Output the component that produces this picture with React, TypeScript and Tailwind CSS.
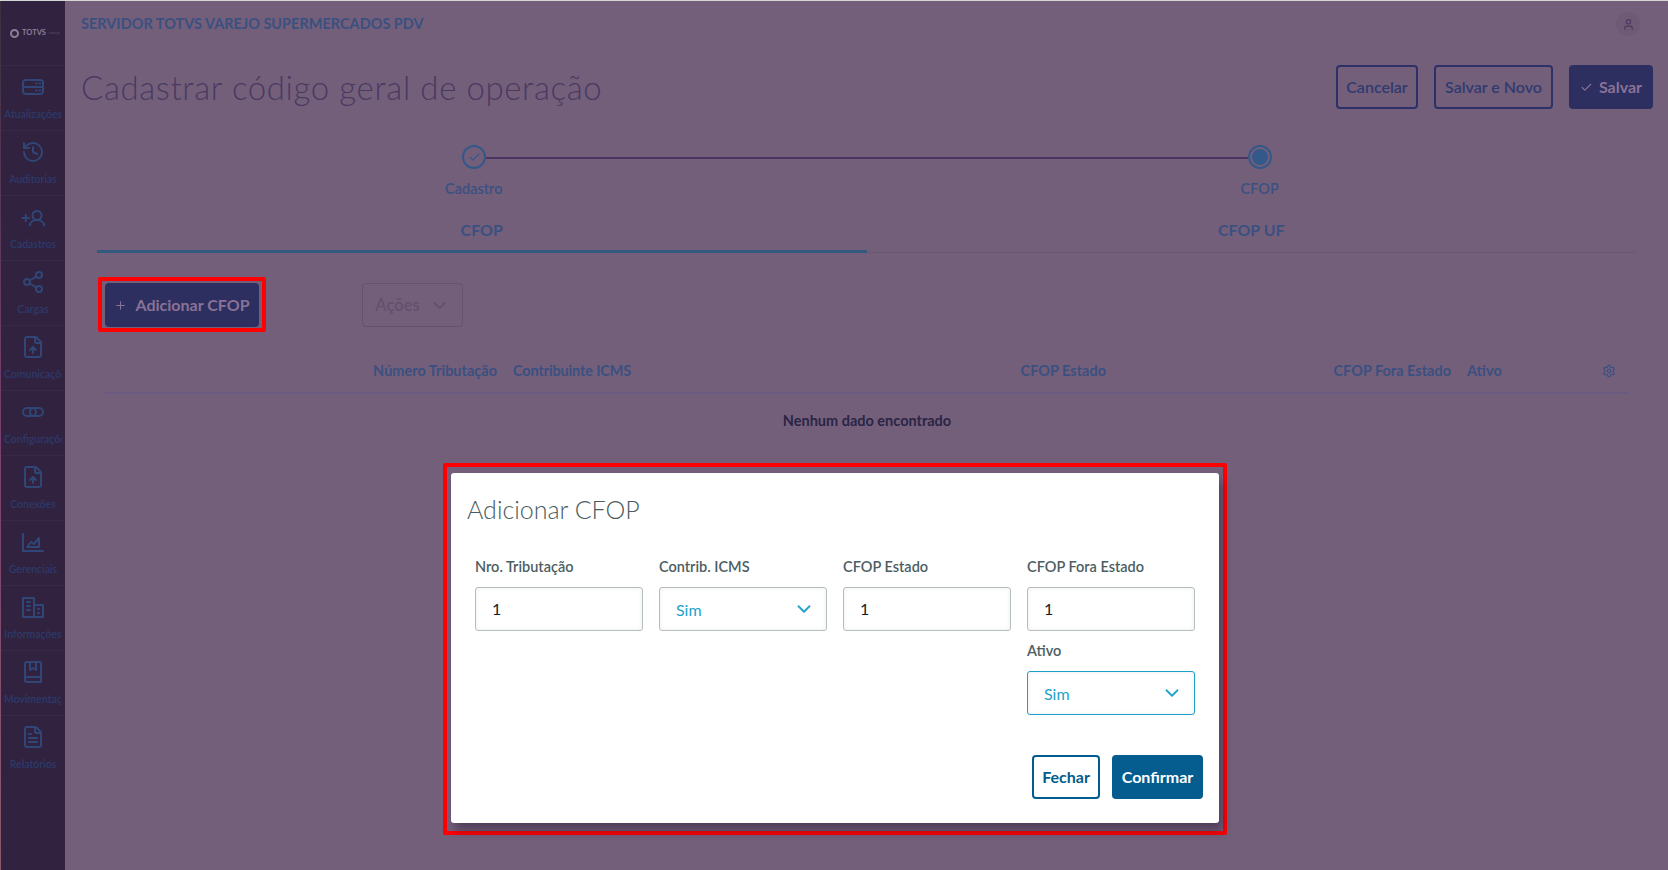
import { Check, ChevronDown, FileText, FileUp, History, Plus, Settings, Share2, User } from "lucide-react";
import type { ReactNode } from "react";

const svgProps = {
  width: 24,
  height: 24,
  viewBox: "0 0 24 24",
  fill: "none",
  stroke: "currentColor",
  strokeWidth: 2,
  strokeLinecap: "round" as const,
  strokeLinejoin: "round" as const,
};

const ServerIcon = () => (
  <svg {...svgProps}>
    <rect x="2" y="5" width="20" height="14" rx="3" />
    <path d="M2 12h20M15 15.5h.5M18.5 15.5h.5M15 8.5h.5M18.5 8.5h.5" />
  </svg>
);

const AddUserIcon = () => (
  <svg {...svgProps}>
    <path d="M1.5 13h6.5M4.75 9.75v6.5" />
    <circle cx="16" cy="10.5" r="4.5" />
    <path d="M9 20.5c0-3.5 3-5.5 7-5.5s7 2 7 5.5" />
  </svg>
);

const ChainIcon = () => (
  <svg {...svgProps}>
    <rect x="2" y="8" width="13" height="8" rx="4" />
    <rect x="9" y="8" width="13" height="8" rx="4" />
  </svg>
);

const ChartIcon = () => (
  <svg {...svgProps}>
    <path d="M2 4v17h20" />
    <path d="M6 17l4-5 3 2 5-6v9z" />
  </svg>
);

const BuildingIcon = () => (
  <svg {...svgProps}>
    <path d="M2 22V3h11v19zM13 10h9v12h-9z" />
    <path d="M6 7h3M6 11h3M6 15h3M17 14h1M17 18h1" />
  </svg>
);

const BookIcon = () => (
  <svg {...svgProps}>
    <path d="M6 2h12a2 2 0 0 1 2 2v18H6a2 2 0 0 1-2-2V4a2 2 0 0 1 2-2z" />
    <path d="M4 17h16" />
    <path d="M9 2v8l3-2 3 2V2" />
  </svg>
);

const menu: { label: string; icon: ReactNode }[] = [
  { label: "Atualizações", icon: <ServerIcon /> },
  { label: "Auditorias", icon: <History size={24} /> },
  { label: "Cadastros", icon: <AddUserIcon /> },
  { label: "Cargas", icon: <Share2 size={24} /> },
  { label: "Comunicações", icon: <FileUp size={24} /> },
  { label: "Configurações", icon: <ChainIcon /> },
  { label: "Conexões", icon: <FileUp size={24} /> },
  { label: "Gerenciais", icon: <ChartIcon /> },
  { label: "Informações", icon: <BuildingIcon /> },
  { label: "Movimentações", icon: <BookIcon /> },
  { label: "Relatórios", icon: <FileText size={24} /> },
];

const Sidebar = () => (
  <aside className="w-[65px] shrink-0 flex bg-[#312240]">
    <div className="w-px bg-gradient-to-b from-[#3a3040] via-[#7a3f70] to-[#8a5a6a]" />
    <div className="flex-1 min-w-0">
      <div className="h-[64px] flex items-center pl-[9px] gap-[3px] text-[#8a7f94]">
        <span className="w-[9px] h-[9px] rounded-full border-2 border-[#8a7f94]" />
        <span className="text-[7.5px] font-bold leading-none">TOTVS</span>
        <span className="text-[4px] leading-none text-[#5f5070]">varejo</span>
      </div>
      {menu.map((item) => (
        <div key={item.label} className="h-[65px] border-t border-[#382a47] pt-[9px]">
          <div className="h-[26px] flex justify-center text-[#2f4676]">{item.icon}</div>
          <div className="mt-[6px] ml-[3px] w-[58px] overflow-hidden whitespace-nowrap text-center text-[10.5px] font-semibold leading-[14px] text-[#2c3a6a]">
            {item.label}
          </div>
        </div>
      ))}
    </div>
  </aside>
);

const OutlineButton = ({ children, width }: { children: ReactNode; width: string }) => (
  <button className={`h-[44px] ${width} rounded-[4px] border-2 border-[#2d3168] text-[#2f3a70] text-[16px] font-semibold`}>
    {children}
  </button>
);

const PageContent = () => (
  <main className="flex-1 min-w-0 px-[16px]">
    <div className="h-[46px] flex items-center justify-between pr-[12px]">
      <span className="text-[14.5px] font-bold text-[#3a5080]">SERVIDOR TOTVS VAREJO SUPERMERCADOS PDV</span>
      <span className="w-[24px] h-[24px] rounded-full bg-[#6f5a75] flex items-center justify-center text-[#4a3a60]">
        <User size={13} />
      </span>
    </div>

    <div className="mt-[18px] -mr-px h-[44px] flex items-center justify-between">
      <h1 className="pt-[2px] text-[33px] font-light text-[#493a62] tracking-[0.6px]">Cadastrar código geral de operação</h1>
      <div className="flex gap-[16px]">
        <OutlineButton width="w-[82px]">Cancelar</OutlineButton>
        <OutlineButton width="w-[119px]">Salvar e Novo</OutlineButton>
        <button className="h-[44px] w-[84px] rounded-[4px] bg-[#2c2f60] text-[#8a7296] text-[16px] font-bold flex items-center justify-center gap-[6px]">
          <Check size={13} />
          Salvar
        </button>
      </div>
    </div>

    {/* STEPPER */}
    <div className="mt-[36px] flex items-center pl-[381px] pr-[380px]">
      <span className="w-[24px] h-[24px] shrink-0 rounded-full border-2 border-[#33588a] flex items-center justify-center text-[#33588a]">
        <Check size={13} />
      </span>
      <div className="flex-1 h-[2px] bg-[#47345f] mt-[2px]" />
      <span className="w-[24px] h-[24px] shrink-0 rounded-full border-2 border-[#33588a] flex items-center justify-center">
        <span className="w-[16px] h-[16px] rounded-full bg-[#33588a]" />
      </span>
    </div>
    <div className="mt-[10px] grid grid-cols-2 text-center text-[14.5px] font-semibold leading-[20px] text-[#3a5080]">
      <span>Cadastro</span>
      <span className="pl-px">CFOP</span>
    </div>

    {/* TABS */}
    <div className="mx-[16px] mt-[10px] grid grid-cols-2 text-center text-[16px] font-bold text-[#3a5080]">
      <div className="h-[44px] pt-[9px] border-b-[3px] border-[#35587f]">CFOP</div>
      <div className="h-[44px] pt-[9px] border-b border-[#6c5672]">CFOP UF</div>
    </div>

    <div className="mt-[30px] ml-[17px] flex items-start">
      <div className="border-4 border-[#ff0000] rounded-[2px] pl-[3px] pr-[3px] pt-[2px] pb-px -mt-[6px]">
        <button className="h-[44px] w-[154px] rounded-[4px] bg-[#2c2f60] text-[#8a7296] text-[16px] font-bold flex items-center justify-center gap-[8px]">
          <Plus size={13} />
          Adicionar CFOP
        </button>
      </div>
      <button className="ml-[96px] h-[44px] w-[101px] rounded-[4px] border border-[#66526f] text-[#63506e] text-[16.5px] font-semibold flex items-center justify-center gap-[9px]">
        Ações
        <ChevronDown size={21} />
      </button>
    </div>

    {/* TABLE */}
    <div className="mt-[14px] ml-[24px] mr-[23px]">
      <div className="h-[48px] pt-[3px] border-b-2 border-[#6b5a80] grid grid-cols-[400px_300px_309px_345px_1fr_40px] items-center text-[14.5px] font-bold text-[#3a5080]">
        <span className="text-right pr-[8px]">Número Tributação</span>
        <span className="pl-[8px] tracking-[-0.15px]">Contribuinte ICMS</span>
        <span className="text-right pr-[8px]">CFOP Estado</span>
        <span className="text-right pr-[8px]">CFOP Fora Estado</span>
        <span className="pl-[8px]">Ativo</span>
        <span className="flex justify-center">
          <Settings size={14} />
        </span>
      </div>
      <div className="h-[53px] flex items-center justify-center text-[14.5px] font-bold text-[#2a2545]">
        Nenhum dado encontrado
      </div>
    </div>
  </main>
);

const Field = ({ label, children, className = "" }: { label: string; children: ReactNode; className?: string }) => (
  <div className={className}>
    <div className="h-[20px] mb-[10px] text-[14.5px] font-semibold leading-[20px] text-[#4d5e62]">{label}</div>
    {children}
  </div>
);

const TextBox = ({ value }: { value: string }) => (
  <div className="h-[44px] px-[16px] pb-px rounded-[3px] border border-[#b6bdbf] bg-white shadow-[inset_0_0_4px_rgba(0,0,0,0.08)] flex items-center text-[16px] text-[#1a1a1a]">
    {value}
  </div>
);

const SelectBox = ({ active }: { active?: boolean }) => (
  <div
    className={`h-[44px] pl-[16px] pr-[11px] rounded-[3px] border bg-white shadow-[inset_0_0_4px_rgba(0,0,0,0.08)] flex items-center justify-between text-[16px] text-[#1ea3c9] ${
      active ? "border-[#1ba0c9]" : "border-[#b6bdbf]"
    }`}
  >
    <span className="mt-[1px]">Sim</span>
    <ChevronDown size={22} />
  </div>
);

const Modal = () => (
  <div className="absolute inset-0 pl-[443px] pt-[462px]">
    <div className="w-[784px] h-[372px] border-4 border-[#ff0000] rounded-[2px] px-[4px] pt-[6px]">
      <div className="w-[768px] h-[350px] rounded-[3px] bg-white shadow-[4px_8px_10px_rgba(40,25,50,0.45)] px-[24px]">
        <h2 className="-ml-[8px] pt-[19px] text-[25px] font-light leading-[34px] text-[#4a5c60]">Adicionar CFOP</h2>
        <div className="mt-[31px] grid grid-cols-[168px_168px_168px_168px] gap-x-[16px] gap-y-[10px]">
          <Field label="Nro. Tributação">
            <TextBox value="1" />
          </Field>
          <Field label="Contrib. ICMS">
            <SelectBox />
          </Field>
          <Field label="CFOP Estado">
            <TextBox value="1" />
          </Field>
          <Field label="CFOP Fora Estado">
            <TextBox value="1" />
          </Field>
          <Field label="Ativo" className="col-start-4">
            <SelectBox active />
          </Field>
        </div>
        <div className="mt-[40px] -mr-[8px] flex justify-end gap-[12px]">
          <button className="h-[44px] w-[68px] rounded-[4px] border-2 border-[#035c8e] text-[#035c8e] text-[16px] font-bold">
            Fechar
          </button>
          <button className="h-[44px] w-[91px] rounded-[4px] bg-[#045c8f] text-white text-[16px] font-bold">
            Confirmar
          </button>
        </div>
      </div>
    </div>
  </div>
);

export default function App() {
  return (
    <div className="relative flex h-[870px] w-[1668px] overflow-hidden border-t border-[#d6d6d6] bg-[#745f7b] font-['Lato','Noto_Sans',sans-serif]">
      <Sidebar />
      <PageContent />
      <Modal />
    </div>
  );
}
